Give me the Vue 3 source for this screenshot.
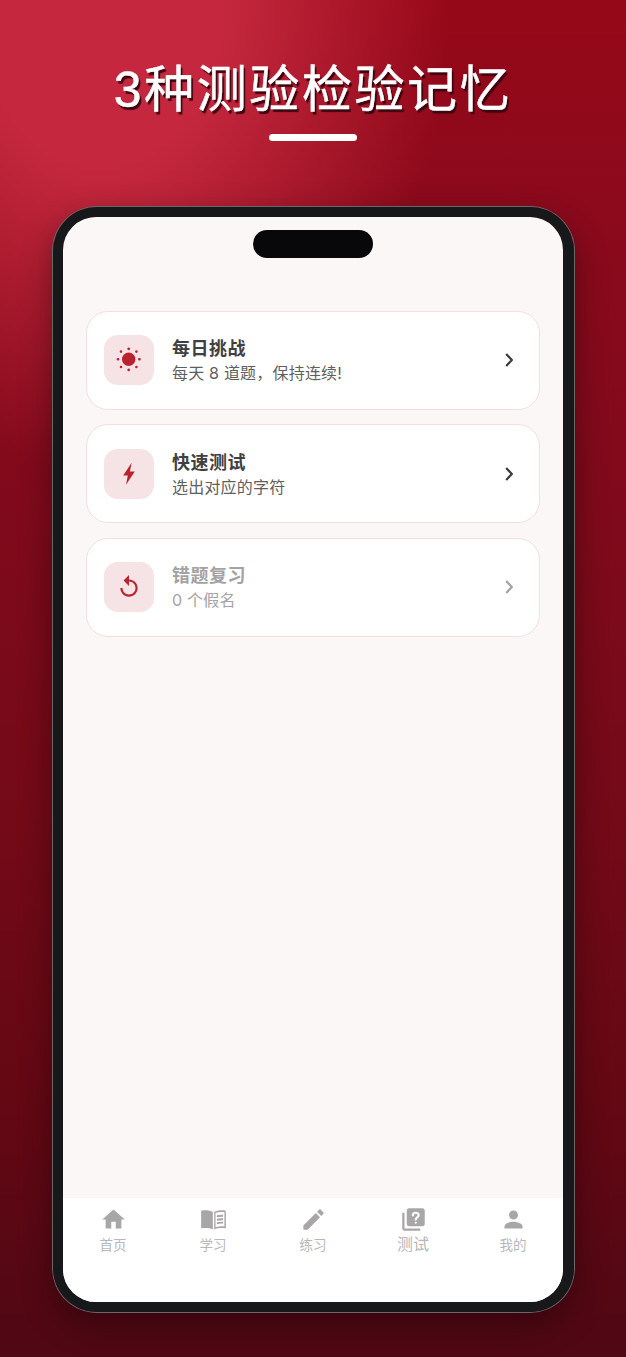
<script setup>
const cards = [
  { title: "每日挑战", sub: "每天 8 道题，保持连续!", icon: "sun" },
  { title: "快速测试", sub: "选出对应的字符", icon: "bolt" },
  { title: "错题复习", sub: "0 个假名", icon: "replay", muted: true },
];

const bookPath =
  "M11.4 5.3C9 3.9 4.5 3.6 1.8 4.1c-.5.1-.8.4-.8.9v14c0 .6.4.9 1 .8 3-.4 6.8-.2 9.4 1z" +
  "M12.6 5.3c2.4-1.4 6.9-1.7 9.6-1.2.5.1.8.4.8.9v14c0 .6-.4.9-1 .8-3-.4-6.8-.2-9.4 1z" +
  "M13.8 6.2c2-.9 5.4-1.1 7.9-.8v12.7c-2.6-.3-5.5-.1-7.9.7z" +
  "M15 8.3c1.8-.5 3.7-.6 5.5-.5v1.7c-1.8-.1-3.7 0-5.5.5z" +
  "M15 11.4c1.8-.5 3.7-.6 5.5-.5v1.7c-1.8-.1-3.7 0-5.5.5z" +
  "M15 14.5c1.8-.5 3.7-.6 5.5-.5v1.7c-1.8-.1-3.7 0-5.5.5z";

const tabs = [
  { label: "首页", path: "M10 20v-6h4v6h5v-8h3L12 3 2 12h3v8z" },
  { label: "学习", path: bookPath },
  { label: "练习", path: "M3 17.25V21h3.75L17.81 9.94l-3.75-3.75L3 17.25zM20.71 7.04c.39-.39.39-1.02 0-1.41l-2.34-2.34c-.39-.39-1.02-.39-1.41 0l-1.83 1.83 3.75 3.75 1.83-1.83z" },
  { label: "测试", big: true, path: "M4 6H2v14c0 1.1.9 2 2 2h14v-2H4V6zM20 2H8c-1.1 0-2 .9-2 2v12c0 1.1.9 2 2 2h12c1.1 0 2-.9 2-2V4c0-1.1-.9-2-2-2z" },
  { label: "我的", path: "M12 12c2.21 0 4-1.79 4-4s-1.79-4-4-4-4 1.79-4 4 1.79 4 4 4zm0 2c-2.67 0-8 1.34-8 4v2h16v-2c0-2.66-5.33-4-8-4z" },
];
</script>

<template>
  <div class="page">
    <h1 class="headline">3种测验检验记忆</h1>
    <div class="underline"></div>

    <div class="phone">
      <div class="island"></div>
      <div class="screen">
        <div class="list">
          <div v-for="card in cards" :key="card.title" class="card" :class="{ muted: card.muted }">
            <div class="cardIcon">
              <svg v-if="card.icon == 'sun'" viewBox="0 0 26 26" width="26" height="26">
                <circle cx="12.7" cy="12.3" r="6.7" fill="#b8232d" />
                <g stroke="#b8232d" stroke-width="2.6" stroke-linecap="round">
                  <path d="M12.7 1.7v.2M12.7 22.7v.2M1.9 12.3h.2M23.3 12.3h.2" />
                  <path d="M5 4.6h.01M20.4 4.6h.01M5 20h.01M20.4 20h.01" />
                </g>
              </svg>
              <svg v-else-if="card.icon == 'bolt'" viewBox="0 0 26 26" width="26" height="26">
                <path d="M15.6 1.8 7.2 14.4h4.6l-1.8 9.4 8.8-13.2h-4.9z" fill="#b8232d" />
              </svg>
              <svg v-else viewBox="0 0 24 24" width="26" height="26">
                <path d="M12 5V1L7 6l5 5V7c3.31 0 6 2.69 6 6s-2.69 6-6 6-6-2.69-6-6H4c0 4.42 3.58 8 8 8s8-3.58 8-8-3.58-8-8-8z" fill="#b8232d" />
              </svg>
            </div>
            <div class="cardText">
              <div class="cardTitle">{{ card.title }}</div>
              <div class="cardSub">{{ card.sub }}</div>
            </div>
            <svg class="chevron" viewBox="0 0 10 16" width="10" height="16">
              <path d="M2.2 2 7.8 8l-5.6 6" fill="none" stroke="currentColor" stroke-width="2.2" />
            </svg>
          </div>
        </div>

        <div class="tabbar">
          <div v-for="tab in tabs" :key="tab.label" class="tab" :class="{ big: tab.big }">
            <svg viewBox="0 0 24 24" width="27" height="27">
              <path :d="tab.path" fill="#a9a6a6" fill-rule="evenodd" />
              <g v-if="tab.big" fill="none" stroke="#fff" stroke-width="1.9" stroke-linecap="round">
                <path d="M11.4 8.4c0-1.5 1.1-2.4 2.6-2.4s2.6.9 2.6 2.2c0 1.9-2.6 2-2.6 3.9" />
                <path d="M14 14.9v.01" />
              </g>
            </svg>
            <span class="tabLabel">{{ tab.label }}</span>
          </div>
        </div>
      </div>
    </div>
  </div>
</template>

<style>
html, body {
  margin: 0;
  padding: 0;
}
</style>

<style scoped>
.page {
  width: 626px;
  height: 1357px;
  overflow: hidden;
  box-sizing: border-box;
  padding-top: 59px;
  font-family: "Inter", "Noto Sans CJK SC", sans-serif;
  background:
    radial-gradient(ellipse 350px 470px at 100px 0, #c5283e 35%, rgba(197, 40, 62, 0) 100%),
    linear-gradient(180deg, #960818 0%, #8c0a1c 15%, #800a1b 37%, #740a18 60%, #640814 81%, #4f0814 100%);
}

.headline {
  margin: 0;
  text-align: center;
  font-family: "Liberation Sans", "Noto Sans CJK SC", sans-serif;
  font-size: 50px;
  line-height: 62px;
  font-weight: 400;
  letter-spacing: 2.6px;
  color: #fff;
  -webkit-text-stroke: 0.5px #fff;
  text-shadow: 2px 3px 1px #3d0610;
}

.underline {
  width: 88px;
  height: 7px;
  border-radius: 4px;
  background: #fff;
  margin: 13px auto 0;
}

.phone {
  position: relative;
  width: 521px;
  height: 1105px;
  box-sizing: border-box;
  margin: 66px 0 0 53px;
  border: 10px solid #17181a;
  border-right-width: 11px;
  border-radius: 44px;
  box-shadow: 0 0 0 1px #6a666a, 0 12px 32px rgba(20, 0, 5, 0.45);
}

.island {
  position: absolute;
  top: 13px;
  left: 190px;
  width: 120px;
  height: 28px;
  border-radius: 14px;
  background: #08080a;
}

.screen {
  height: 100%;
  border-radius: 33px;
  overflow: hidden;
  background: #fbf7f6;
  display: flex;
  flex-direction: column;
}

.list {
  flex: 1;
  padding: 93.5px 23px 0;
  display: flex;
  flex-direction: column;
  gap: 14.5px;
}

.card {
  height: 99px;
  box-sizing: border-box;
  display: flex;
  align-items: center;
  padding: 0 25.5px 0 17px;
  background: #fff;
  border: 1px solid #f3dfe0;
  border-radius: 22px;
}

.cardIcon {
  width: 50px;
  height: 50px;
  border-radius: 14px;
  background: #f5e3e5;
  display: flex;
  align-items: center;
  justify-content: center;
  flex-shrink: 0;
}

.cardText {
  flex: 1;
  margin-left: 18px;
  padding-top: 1px;
}

.cardTitle {
  font-size: 18px;
  line-height: 25px;
  font-weight: 700;
  letter-spacing: 0.5px;
  color: #404040;
}

.cardSub {
  margin-top: 1px;
  font-size: 16px;
  line-height: 23px;
  letter-spacing: 0.2px;
  color: #5f5f5f;
}

.chevron {
  color: #3c3c3c;
}

.muted .cardTitle,
.muted .cardSub {
  color: #a3a3a3;
}

.muted .chevron {
  color: #a3a3a3;
}

.tabbar {
  height: 104px;
  flex-shrink: 0;
  background: #fff;
  display: flex;
}

.tab {
  width: 100px;
  display: flex;
  flex-direction: column;
  align-items: center;
  padding-top: 8px;
  color: #b8b8b8;
}

.tabLabel {
  font-size: 13.5px;
  line-height: 18px;
  margin-top: 3px;
}

.big .tabLabel {
  font-size: 16px;
  margin-top: 2px;
}
</style>
